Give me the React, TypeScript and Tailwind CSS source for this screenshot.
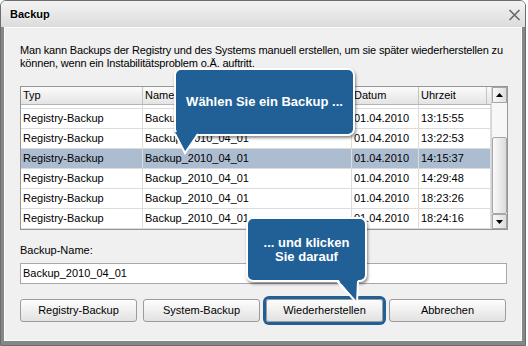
import React from 'react';

const rows = [
  { typ: 'Registry-Backup', name: 'Backup_2010_04_01', datum: '01.04.2010', zeit: '12:58:04' },
  { typ: 'Registry-Backup', name: 'Backup_2010_04_01', datum: '01.04.2010', zeit: '13:15:55' },
  { typ: 'Registry-Backup', name: 'Backup_2010_04_01', datum: '01.04.2010', zeit: '13:22:53' },
  { typ: 'Registry-Backup', name: 'Backup_2010_04_01', datum: '01.04.2010', zeit: '14:15:37', selected: true },
  { typ: 'Registry-Backup', name: 'Backup_2010_04_01', datum: '01.04.2010', zeit: '14:29:48' },
  { typ: 'Registry-Backup', name: 'Backup_2010_04_01', datum: '01.04.2010', zeit: '18:23:26' },
  { typ: 'Registry-Backup', name: 'Backup_2010_04_01', datum: '01.04.2010', zeit: '18:24:16' },
];

const cell = 'h-[20px] flex items-center px-[2px] border-r border-b border-[#dcdcdc] whitespace-nowrap overflow-hidden';
const head = 'h-[17px] flex items-center px-[2px] border-r border-[#c3c3c3] whitespace-nowrap';
const btn =
  'h-[23px] flex items-center justify-center rounded-[3px] border border-[#9c9c9c] bg-linear-to-b from-[#fdfdfd] to-[#e2e2e2] text-[11px] text-black';

const Arrow: React.FC<{ up?: boolean }> = ({ up }) => (
  <svg width="7" height="4" viewBox="0 0 7 4">
    <polygon points={up ? '3.5,0 7,4 0,4' : '0,0 7,0 3.5,4'} fill="#000" />
  </svg>
);

export default function App() {
  return (
    <div className="w-[528px] h-[346px] bg-white font-['Liberation_Sans',Arial,sans-serif] text-black relative overflow-hidden">
      <div className="w-[526px] h-[346px] flex flex-col rounded-t-[6px] border border-[#6c6c6c] overflow-hidden">
        {/* title bar */}
        <div className="h-[26px] shrink-0 flex items-center justify-between pl-[9px] pr-[4px] bg-linear-to-b from-[#f3f3f3] to-[#dcdcdc]">
          <span className="text-[11px] font-bold [text-shadow:0_0_3px_#fff]">Backup</span>
          <svg width="13" height="12" viewBox="0 0 13 12" className="mt-[1px]">
            <path d="M1.5 1 L11.5 11 M11.5 1 L1.5 11" stroke="#6b6b6b" strokeWidth="1.7" />
          </svg>
        </div>

        {/* body */}
        <div className="flex-1 border-x-[3px] border-b-[4px] border-[#878787]">
          <div className="h-full border border-[#fbfbfb] bg-[#f0f0f0] pl-[15px] pt-[16px]">
            <p className="text-[11px] leading-[13px] tracking-[-0.17px] whitespace-nowrap">
              Man kann Backups der Registry und des Systems manuell erstellen, um sie später wiederherstellen zu
              <br />
              können, wenn ein Instabilitätsproblem o.Ä. auftritt.
            </p>

            {/* table */}
            <div className="mt-[16px] w-[488px] h-[144px] border border-[#969696] bg-white flex text-[11px]">
              <div className="w-[470px] flex flex-col">
                <div className="flex shrink-0 border-b border-[#b4b4b4] bg-linear-to-b from-[#fbfbfb] to-[#e4e4e4]">
                  <div className={`${head} w-[122px]`}>Typ</div>
                  <div className={`${head} w-[209px]`}>Name</div>
                  <div className={`${head} w-[67px]`}>Datum</div>
                  <div className={`${head} w-[68px]`}>Uhrzeit</div>
                  <div className="w-[4px]" />
                </div>
                <div className="h-[125px] overflow-hidden">
                  <div className="-mt-[16px]">
                    {rows.map((r, i) => (
                      <div key={i} className={`flex ${r.selected ? 'bg-[#adbdd1]' : 'bg-white'}`}>
                        <div className={`${cell} w-[122px]`}>{r.typ}</div>
                        <div className={`${cell} w-[209px]`}>{r.name}</div>
                        <div className={`${cell} w-[67px]`}>{r.datum}</div>
                        <div className={`${cell} w-[72px]`}>{r.zeit}</div>
                      </div>
                    ))}
                  </div>
                </div>
              </div>
              {/* scrollbar */}
              <div className="w-[16px] flex flex-col border-l border-[#d6d6d6] bg-[#f7f7f7]">
                <div className="h-[16px] flex items-center justify-center border border-[#a5a5a5] bg-linear-to-r from-[#fafafa] to-[#dedede]">
                  <Arrow up />
                </div>
                <div className="h-[34px]" />
                <div className="flex-1 border border-[#a5a5a5] rounded-[2px] bg-linear-to-r from-[#fafafa] to-[#dcdcdc]" />
                <div className="h-[15px] flex items-center justify-center border border-[#a5a5a5] bg-linear-to-r from-[#fafafa] to-[#dedede]">
                  <Arrow />
                </div>
              </div>
            </div>

            <div className="mt-[14px] text-[11px] leading-[13px]">Backup-Name:</div>
            <div className="mt-[6px] w-[487px] h-[21px] border border-[#a8a8a8] bg-white flex items-center px-[2px] text-[11px]">
              Backup_2010_04_01
            </div>

            <div className="mt-[15px] w-[486px] grid grid-cols-4 gap-[6px]">
              <div className={btn}>Registry-Backup</div>
              <div className={btn}>System-Backup</div>
              <div className={`${btn} shadow-[0_0_0_3px_#215f97]`}>Wiederherstellen</div>
              <div className={btn}>Abbrechen</div>
            </div>
          </div>
        </div>
      </div>

      {/* callout 1 */}
      <div className="absolute left-[174px] top-[68px] w-[181px] h-[68px] rounded-[7px] border-2 border-white bg-[#215f97] shadow-[1px_2px_3px_rgba(0,0,0,0.45)] flex items-center justify-center text-white text-[13px] font-bold">
        Wählen Sie ein Backup ...
      </div>
      <svg className="absolute left-[172px] top-[132px]" width="30" height="24" viewBox="0 0 30 24">
        <polygon points="3,0 26,0 13,21" fill="#215f97" />
        <polyline points="3,2 13,21 26,2" fill="none" stroke="#fff" strokeWidth="2" />
      </svg>

      {/* callout 2 */}
      <div className="absolute left-[246px] top-[217px] w-[121px] h-[65px] rounded-[7px] border-2 border-white bg-[#215f97] shadow-[1px_2px_3px_rgba(0,0,0,0.45)] flex items-center justify-center text-center text-white text-[13px] leading-[14px] font-bold">
        ... und klicken
        <br />
        Sie darauf
      </div>
      <svg className="absolute left-[334px] top-[278px]" width="28" height="28" viewBox="0 0 28 28">
        <polygon points="3,0 24,0 23,25" fill="#215f97" />
        <polyline points="3,3 23,25 24,3" fill="none" stroke="#fff" strokeWidth="2" />
      </svg>
    </div>
  );
}
